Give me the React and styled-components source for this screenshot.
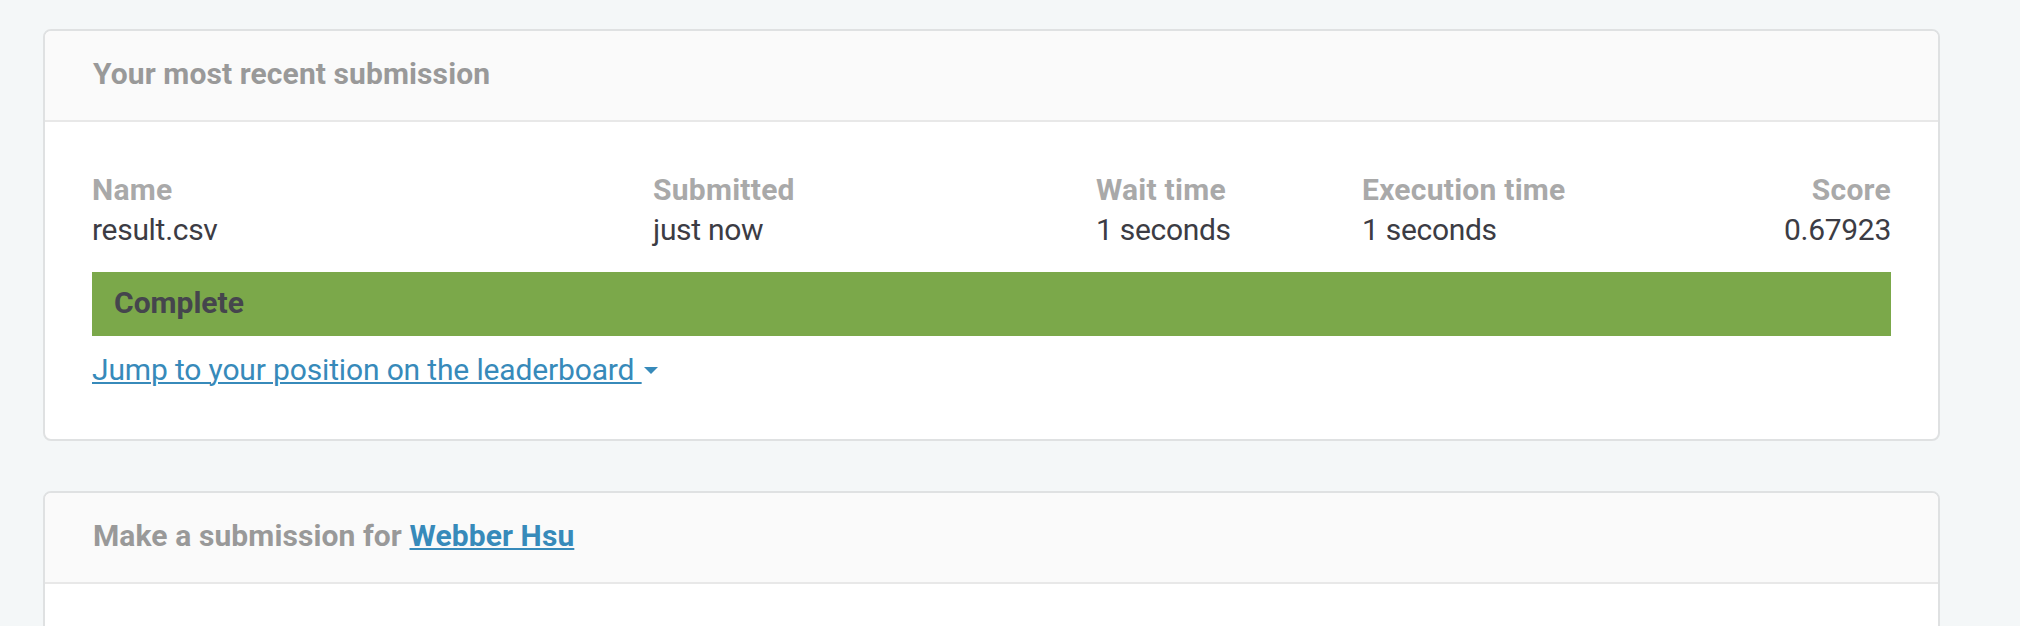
import React from "react";
import styled, { createGlobalStyle } from "styled-components";

const Global = createGlobalStyle`
  html, body {
    margin: 0;
    padding: 0;
    background: #f4f7f8;
    font-family: Roboto, "Liberation Sans", sans-serif;
    font-size: 30px;
    line-height: 40px;
    color: #3c3c44;
  }
`;

const Page = styled.div`
  display: flex;
  flex-direction: column;
  gap: 50px;
  padding: 29px 0 0 43px;
  width: 1897px;
`;

const Card = styled.section`
  background: #fff;
  border: 2px solid #dfe1e2;
  border-radius: 8px;
  overflow: hidden;
`;

const CardHeader = styled.header`
  background: #fafafa;
  border-bottom: 2px solid #e8e8e8;
  padding: 23px 48px 26px 48px;
  font-weight: 700;
  letter-spacing: 0.1px;
  color: #999;
`;

const CardBody = styled.div`
  padding: 47px 47px 49px 47px;
  min-height: ${(p) => p.$minHeight || 0}px;
  box-sizing: border-box;
`;

const StatsGrid = styled.div`
  display: grid;
  grid-template-columns: 561px 443px 266px 1fr auto;
`;

const Stat = styled.div`
  display: flex;
  flex-direction: column;
  align-items: ${(p) => (p.$right ? "flex-end" : "flex-start")};
`;

const Label = styled.span`
  font-weight: 700;
  color: #a9a9a9;
  line-height: 41px;
  letter-spacing: 0.25px;
`;

const Value = styled.span`
  color: #3c3c44;
  letter-spacing: -0.3px;
`;

const StatusBar = styled.div`
  margin-top: 22px;
  height: 64px;
  background: #7ba84a;
  display: flex;
  align-items: center;
  padding: 0 22px 3px 22px;
  box-sizing: border-box;
  font-weight: 700;
  color: #45454d;
`;

const JumpLink = styled.a`
  display: inline-block;
  margin-top: 14px;
  color: #378aba;
  letter-spacing: -0.15px;
  text-decoration: underline;
  text-underline-offset: 2px;
  text-decoration-thickness: 2px;
  cursor: pointer;
`;

const Caret = styled.span`
  display: inline-block;
  width: 0;
  height: 0;
  border-left: 7px solid transparent;
  border-right: 7px solid transparent;
  border-top: 7px solid #378aba;
  vertical-align: middle;
  margin-left: 2px;
  position: relative;
  top: -2px;
`;

const NameLink = styled.a`
  color: #378aba;
  text-decoration: underline;
  text-underline-offset: 2px;
  text-decoration-thickness: 2px;
  cursor: pointer;
`;

const stats = [
  { label: "Name", value: "result.csv" },
  { label: "Submitted", value: "just now" },
  { label: "Wait time", value: "1 seconds" },
  { label: "Execution time", value: "1 seconds" },
  { label: "Score", value: "0.67923", right: true },
];

export default function App() {
  return (
    <>
      <Global />
      <Page>
        <Card>
          <CardHeader>Your most recent submission</CardHeader>
          <CardBody>
            <StatsGrid>
              {stats.map((s) => (
                <Stat key={s.label} $right={s.right}>
                  <Label>{s.label}</Label>
                  <Value>{s.value}</Value>
                </Stat>
              ))}
            </StatsGrid>
            <StatusBar>Complete</StatusBar>
            <JumpLink>
              Jump to your position on the leaderboard <Caret />
            </JumpLink>
          </CardBody>
        </Card>
        <Card>
          <CardHeader>
            Make a submission for <NameLink>Webber Hsu</NameLink>
          </CardHeader>
          <CardBody $minHeight={200} />
        </Card>
      </Page>
    </>
  );
}
